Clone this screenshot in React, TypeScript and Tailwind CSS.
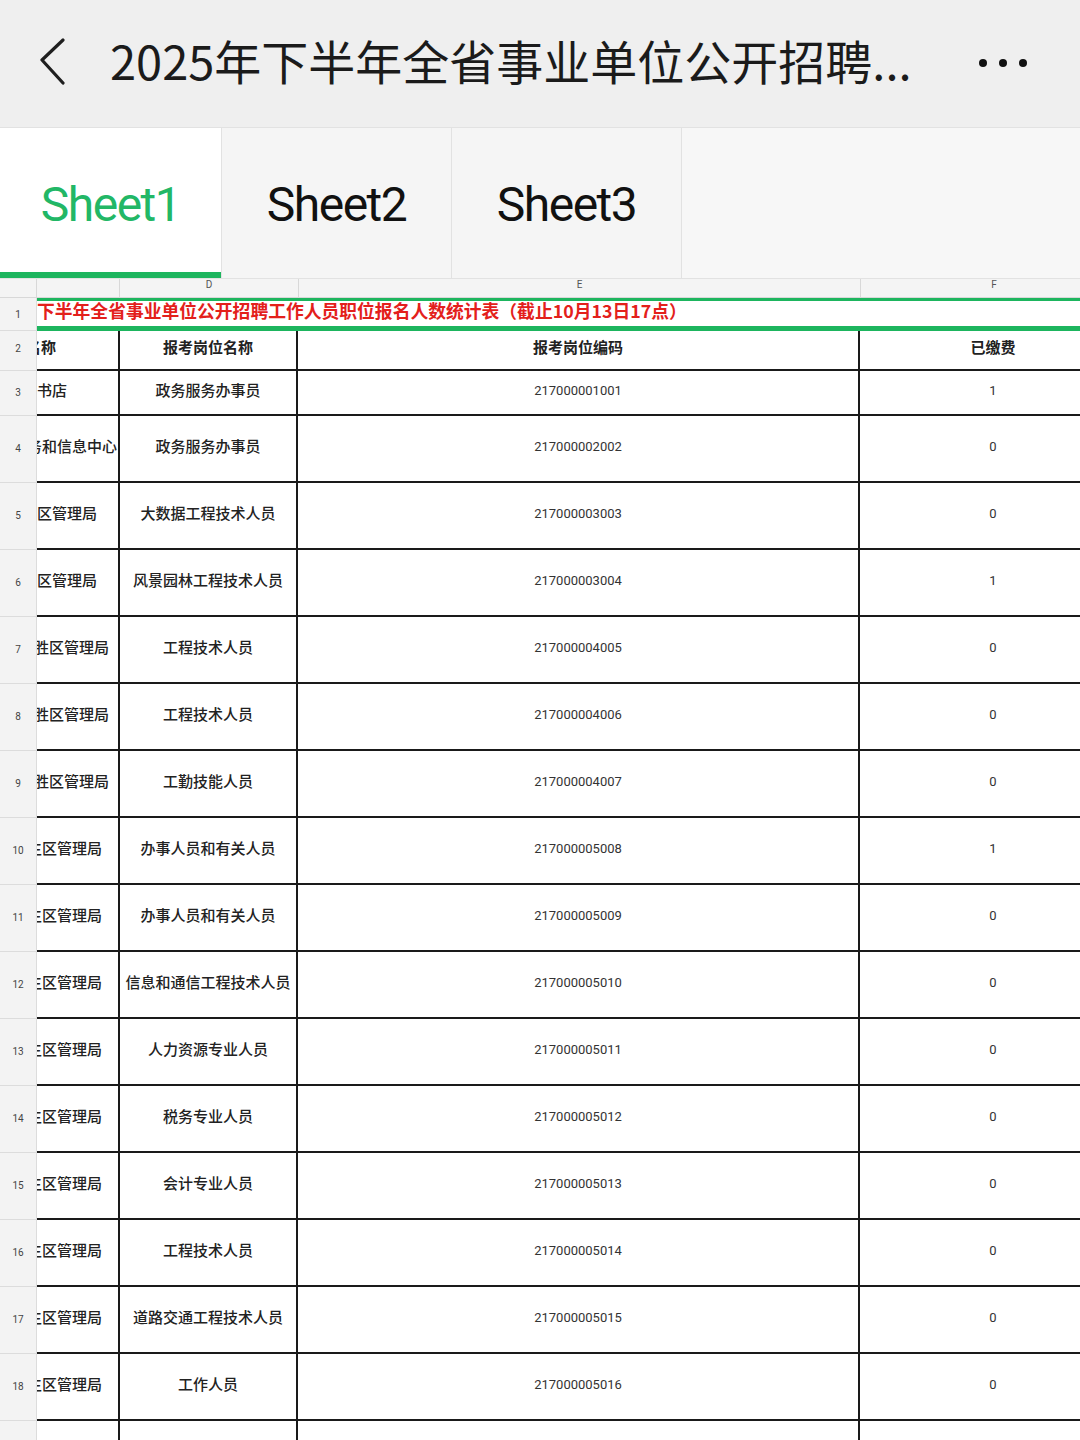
import React from "react";

const CJK = { fontFamily: '"Noto Sans CJK SC", "Noto Sans", sans-serif' };
const NUM = { fontFamily: 'Roboto, "Noto Sans CJK SC", sans-serif' };

type Row = { n: number; c: string; off: number; d: string; e: string; f: string };

const rows: Row[] = [
  { n: 3, c: "书店", off: 0, d: "政务服务办事员", e: "217000001001", f: "1" },
  { n: 4, c: "务和信息中心", off: -10, d: "政务服务办事员", e: "217000002002", f: "0" },
  { n: 5, c: "区管理局", off: 0, d: "大数据工程技术人员", e: "217000003003", f: "0" },
  { n: 6, c: "区管理局", off: 0, d: "风景园林工程技术人员", e: "217000003004", f: "1" },
  { n: 7, c: "胜区管理局", off: -3, d: "工程技术人员", e: "217000004005", f: "0" },
  { n: 8, c: "胜区管理局", off: -3, d: "工程技术人员", e: "217000004006", f: "0" },
  { n: 9, c: "胜区管理局", off: -3, d: "工勤技能人员", e: "217000004007", f: "0" },
  { n: 10, c: "生区管理局", off: -10, d: "办事人员和有关人员", e: "217000005008", f: "1" },
  { n: 11, c: "生区管理局", off: -10, d: "办事人员和有关人员", e: "217000005009", f: "0" },
  { n: 12, c: "生区管理局", off: -10, d: "信息和通信工程技术人员", e: "217000005010", f: "0" },
  { n: 13, c: "生区管理局", off: -10, d: "人力资源专业人员", e: "217000005011", f: "0" },
  { n: 14, c: "生区管理局", off: -10, d: "税务专业人员", e: "217000005012", f: "0" },
  { n: 15, c: "生区管理局", off: -10, d: "会计专业人员", e: "217000005013", f: "0" },
  { n: 16, c: "生区管理局", off: -10, d: "工程技术人员", e: "217000005014", f: "0" },
  { n: 17, c: "生区管理局", off: -10, d: "道路交通工程技术人员", e: "217000005015", f: "0" },
  { n: 18, c: "生区管理局", off: -10, d: "工作人员", e: "217000005016", f: "0" },
];

function DataRow({ r, h }: { r: Row; h: string }) {
  return (
    <div className={`flex ${h}`}>
      <div className="w-[37px] shrink-0 bg-[#f3f3f3] border-r border-b border-[#dcdcdc] flex items-center justify-center pb-[2px] text-[10px] text-[#444]" style={NUM}>
        {r.n}
      </div>
      <div className="flex flex-1 border-b-2 border-[#1a1a1a]">
        <div className="w-[83px] shrink-0 border-r-2 border-[#1a1a1a] overflow-hidden flex items-center pb-[4px]">
          <span className="whitespace-nowrap text-[15px] font-medium text-[#222]" style={{ ...CJK, marginLeft: r.off }}>
            {r.c}
          </span>
        </div>
        <div className="w-[178px] shrink-0 border-r-2 border-[#1a1a1a] flex items-center justify-center pb-[4px]">
          <span className="whitespace-nowrap text-[15px] font-medium text-[#222]" style={CJK}>{r.d}</span>
        </div>
        <div className="w-[562px] shrink-0 border-r-2 border-[#1a1a1a] flex items-center justify-center pb-[4px]">
          <span className="text-[13px] text-[#333]" style={NUM}>{r.e}</span>
        </div>
        <div className="w-[266px] shrink-0 flex items-center justify-center pb-[4px]">
          <span className="text-[13px] text-[#333]" style={NUM}>{r.f}</span>
        </div>
      </div>
    </div>
  );
}

export default function App() {
  return (
    <div className="w-[1080px] h-[1440px] overflow-hidden bg-white">
      {/* Top bar */}
      <div className="h-[127px] bg-[#efefef] flex items-center relative">
        <svg className="ml-[38px] shrink-0 -mt-[2px]" width="32" height="50" viewBox="0 0 32 50">
          <polyline points="25,2 4,22 25,45" fill="none" stroke="#1f1f1f" strokeWidth="3.2" strokeLinecap="round" strokeLinejoin="round" />
        </svg>
        <div className="ml-[40px] -mt-[9px] text-[47px] leading-none text-[#1b1b1b] whitespace-nowrap" style={CJK}>
          2025年下半年全省事业单位公开招聘...
        </div>
        <div className="ml-auto mr-[53px] -mt-[2px] flex items-center gap-[12px]">
          <div className="w-[8px] h-[8px] rounded-full bg-[#111]" />
          <div className="w-[8px] h-[8px] rounded-full bg-[#111]" />
          <div className="w-[8px] h-[8px] rounded-full bg-[#111]" />
        </div>
      </div>

      {/* Sheet tabs */}
      <div className="h-[152px] flex bg-[#f5f5f5] border-t border-b border-[#e2e2e2]">
        <div className="w-[221px] bg-white border-b-[6px] border-[#1db55e] flex items-center justify-center pt-[10px]">
          <span className="text-[48px] text-[#22b766] tracking-[-1.5px]" style={NUM}>Sheet1</span>
        </div>
        <div className="w-[230px] border-l border-[#e2e2e2] flex items-center justify-center pt-[4px]">
          <span className="text-[48px] text-[#111] tracking-[-1.5px]" style={NUM}>Sheet2</span>
        </div>
        <div className="w-[231px] border-l border-r border-[#e2e2e2] flex items-center justify-center pt-[4px]">
          <span className="text-[48px] text-[#111] tracking-[-1.5px]" style={NUM}>Sheet3</span>
        </div>
        <div className="flex-1 bg-[#f7f7f7]" />
      </div>

      {/* Column headers */}
      <div className="h-[19px] flex bg-[#f4f4f4] text-[10px] text-[#555]" style={NUM}>
        <div className="w-[37px] shrink-0 border-r border-b border-[#d8d8d8]" />
        <div className="w-[83px] shrink-0 border-r border-b border-[#d8d8d8]" />
        <div className="w-[179px] shrink-0 border-r border-b border-[#d8d8d8] flex justify-center leading-[12px]">D</div>
        <div className="w-[562px] shrink-0 border-r border-b border-[#d8d8d8] flex justify-center leading-[12px]">E</div>
        <div className="w-[266px] shrink-0 border-b border-[#d8d8d8] flex justify-center leading-[12px]">F</div>
      </div>

      {/* Row 1 title */}
      <div className="flex h-[33px]">
        <div className="w-[37px] shrink-0 bg-[#f3f3f3] border-r border-b border-[#dcdcdc] flex items-center justify-center text-[10px] text-[#444]" style={NUM}>
          1
        </div>
        <div className="flex-1 border-t-[3px] border-b-[5px] border-[#1db55e] flex items-center overflow-hidden pb-[6px]">
          <span className="whitespace-nowrap text-[17.8px] font-bold text-[#e3201b] leading-none" style={CJK}>
            下半年全省事业单位公开招聘工作人员职位报名人数统计表（截止10月13日17点）
          </span>
        </div>
      </div>

      {/* Row 2 header */}
      <div className="flex h-[40px]">
        <div className="w-[37px] shrink-0 bg-[#f3f3f3] border-r border-b border-[#dcdcdc] flex items-center justify-center pb-[4px] text-[10px] text-[#444]" style={NUM}>
          2
        </div>
        <div className="flex flex-1 border-b-2 border-[#1a1a1a]">
          <div className="w-[83px] shrink-0 border-r-2 border-[#1a1a1a] overflow-hidden flex items-center pb-[6px]">
            <span className="whitespace-nowrap text-[15px] font-bold text-[#222]" style={{ ...CJK, marginLeft: -11 }}>名称</span>
          </div>
          <div className="w-[178px] shrink-0 border-r-2 border-[#1a1a1a] flex items-center justify-center pb-[6px]">
            <span className="text-[15px] font-bold text-[#222]" style={CJK}>报考岗位名称</span>
          </div>
          <div className="w-[562px] shrink-0 border-r-2 border-[#1a1a1a] flex items-center justify-center pb-[6px]">
            <span className="text-[15px] font-bold text-[#222]" style={CJK}>报考岗位编码</span>
          </div>
          <div className="w-[266px] shrink-0 flex items-center justify-center pb-[6px]">
            <span className="text-[15px] font-bold text-[#222]" style={CJK}>已缴费</span>
          </div>
        </div>
      </div>

      {rows.map((r) => (
        <DataRow key={r.n} r={r} h={r.n === 3 ? "h-[45px]" : "h-[67px]"} />
      ))}

      {/* Partial row 19 */}
      <div className="flex h-[67px]">
        <div className="w-[37px] shrink-0 bg-[#f3f3f3] border-r border-[#dcdcdc]" />
        <div className="flex flex-1">
          <div className="w-[83px] shrink-0 border-r-2 border-[#1a1a1a]" />
          <div className="w-[178px] shrink-0 border-r-2 border-[#1a1a1a]" />
          <div className="w-[562px] shrink-0 border-r-2 border-[#1a1a1a]" />
          <div className="flex-1" />
        </div>
      </div>
    </div>
  );
}
